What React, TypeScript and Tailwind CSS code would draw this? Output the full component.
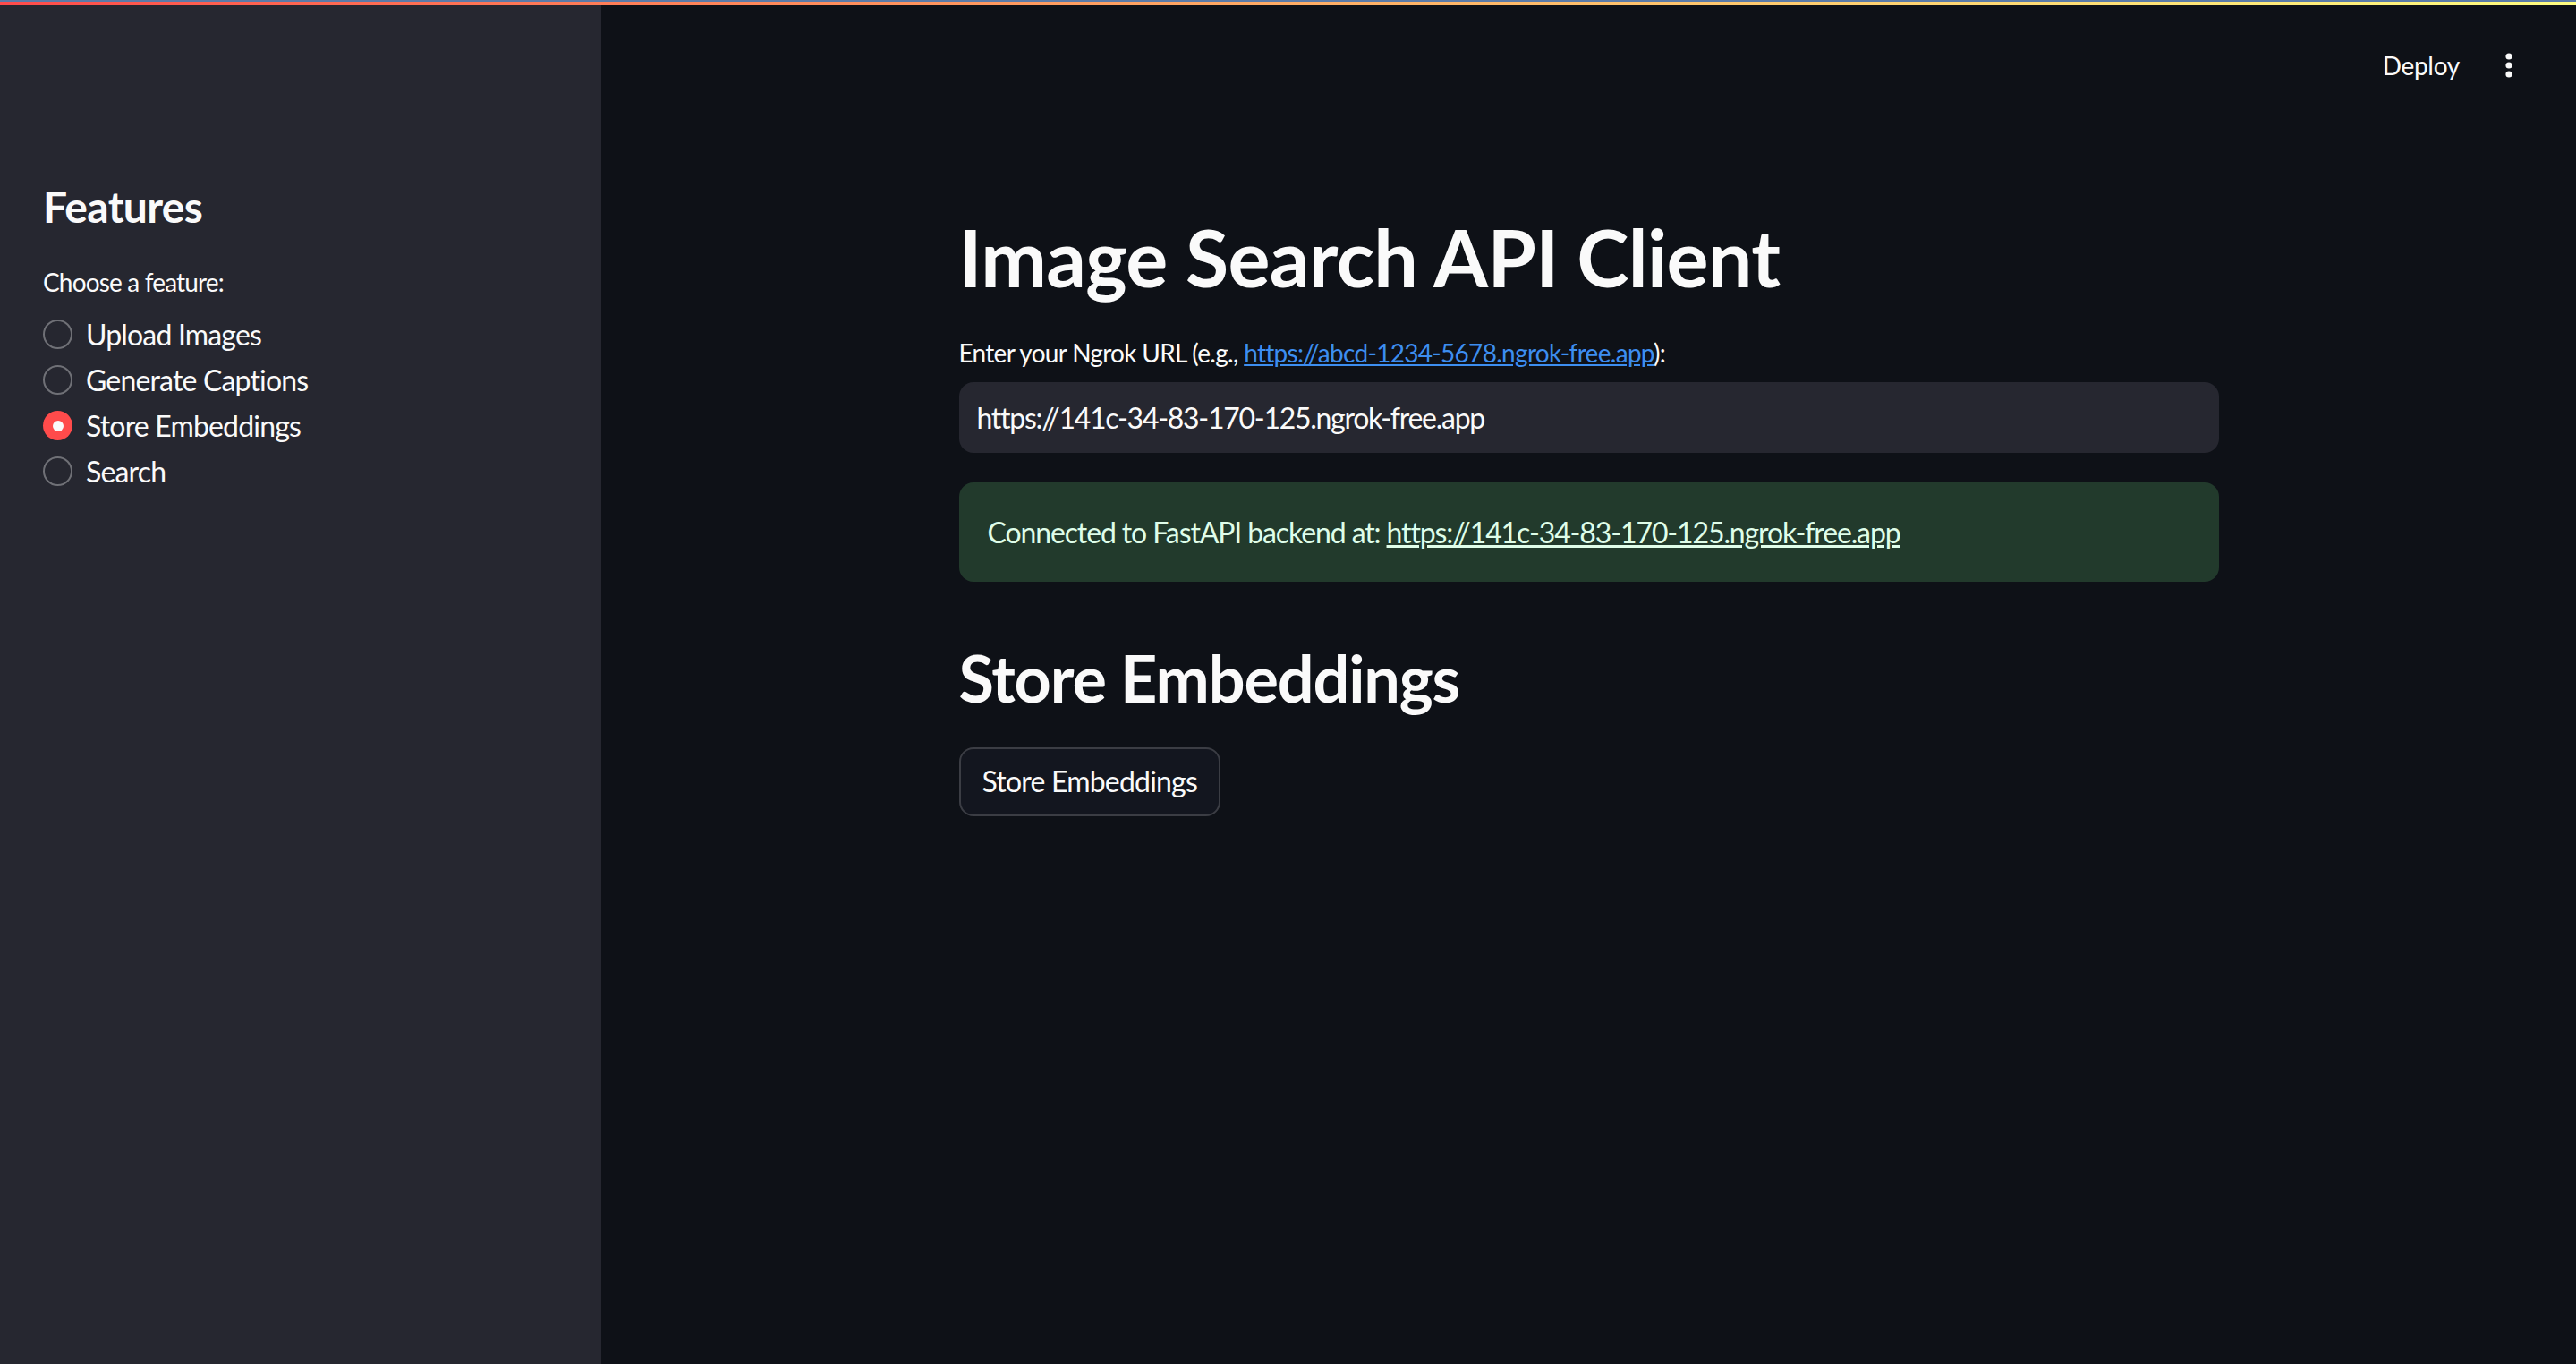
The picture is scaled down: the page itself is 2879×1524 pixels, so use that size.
import React from "react";

const features = ["Upload Images", "Generate Captions", "Store Embeddings", "Search"];

function Radio({ label, checked }: { label: string; checked: boolean }) {
  return (
    <div className="flex items-center h-[51px]">
      {checked ? (
        <div className="w-[33px] h-[33px] rounded-full bg-[#ff4b4b] flex items-center justify-center">
          <div className="w-[12px] h-[12px] rounded-full bg-[#fafafa]" />
        </div>
      ) : (
        <div className="w-[33px] h-[33px] rounded-full border-2 border-[#6f7076]" />
      )}
      <span className="ml-[15px] text-[32px] leading-[1.6] tracking-[-0.026em] text-[#fafafa]">{label}</span>
    </div>
  );
}

export default function App() {
  const url = "https://141c-34-83-170-125.ngrok-free.app";
  return (
    <div className="w-[2879px] h-[1524px] flex flex-col bg-[#0e1117] font-['Lato',sans-serif] overflow-hidden">
      <div className="h-[2px] bg-[#5b7ba8]" />
      <div className="h-[4px] bg-gradient-to-r from-[#ff4b4b] to-[#fffd80]" />
      <div className="flex flex-1">
        {/* sidebar */}
        <aside className="w-[672px] bg-[#262730] px-[48px] pt-[196px]">
          <h2 className="text-[48px] leading-[1.2] font-bold tracking-[-0.014em] text-[#fafafa]">Features</h2>
          <p className="mt-[33px] text-[28px] leading-[1.6] tracking-[-0.03em] text-[#fafafa]">Choose a feature:</p>
          <div className="mt-[11px]">
            {features.map((f) => (
              <Radio key={f} label={f} checked={f === "Store Embeddings"} />
            ))}
          </div>
        </aside>

        {/* main */}
        <main className="flex-1 flex flex-col">
          <div className="h-[134px] flex items-center justify-end pr-[70px]">
            <span className="text-[28px] tracking-[-0.01em] text-[#fafafa]">Deploy</span>
            <svg className="ml-[50px]" width="10" height="30" viewBox="0 0 10 30">
              <circle cx="5" cy="5" r="3.6" fill="#fafafa" />
              <circle cx="5" cy="15" r="3.6" fill="#fafafa" />
              <circle cx="5" cy="25" r="3.6" fill="#fafafa" />
            </svg>
          </div>

          <div className="w-[1408px] mx-auto pt-[95px] text-[#fafafa]">
            <h1 className="text-[88px] leading-[1.2] font-bold tracking-[-0.008em]">Image Search API Client</h1>
            <p className="mt-[31px] text-[28px] leading-[1.6] tracking-[-0.025em]">
              Enter your Ngrok URL (e.g.,{" "}
              <a className="text-[#3d8ef0] underline">https://abcd-1234-5678.ngrok-free.app</a>):
            </p>
            <div className="mt-[11px] h-[79px] rounded-[16px] bg-[#262730] flex items-center px-[20px] text-[32px] tracking-[-0.04em]">
              {url}
            </div>
            <div className="mt-[33px] h-[111px] rounded-[16px] bg-[#223a2c] flex items-center px-[32px] text-[32px] tracking-[-0.035em] text-[#dffde9]">
              Connected to FastAPI backend at:&nbsp;<a className="underline">{url}</a>
            </div>
            <h2 className="mt-[64px] text-[72px] leading-[1.2] font-bold tracking-[-0.016em]">Store Embeddings</h2>
            <button className="mt-[34px] h-[77px] px-[24px] rounded-[16px] border-2 border-[#3b3d44] bg-[#13161f] text-[32px] tracking-[-0.025em] text-[#fafafa]">
              Store Embeddings
            </button>
          </div>
        </main>
      </div>
    </div>
  );
}
